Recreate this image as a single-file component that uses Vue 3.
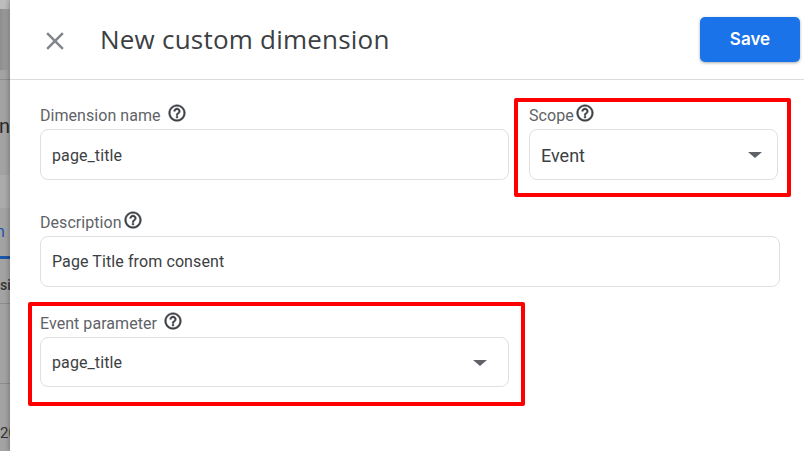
<script setup>
const helpPath = 'M11 18h2v-2h-2v2zm1-16C6.48 2 2 6.48 2 12s4.48 10 10 10 10-4.48 10-10S17.52 2 12 2zm0 18c-4.41 0-8-3.59-8-8s3.59-8 8-8 8 3.59 8 8-3.59 8-8 8zm0-14c-2.21 0-4 1.79-4 4h2c0-1.1.9-2 2-2s2 .9 2 2c0 2-3 1.75-3 5h2c0-2.25 3-2.5 3-5 0-2.21-1.79-4-4-4z'
</script>

<template>
  <div class="screen">
    <aside class="backdrop">
      <div class="bd-top"></div>
      <div class="bd-band"></div>
      <div class="bd-rule"></div>
      <span class="bd-n">n</span>
      <div class="bd-light"></div>
      <div class="bd-tab"><span class="bd-blue">n</span></div>
      <div class="bd-sic">sic</div>
      <div class="bd-line one"></div>
      <div class="bd-line two"></div>
      <div class="bd-num">20</div>
    </aside>
    <main class="panel">
      <header class="head">
        <button class="close" aria-label="Close">
          <svg width="30" height="30" viewBox="0 0 24 24"><path fill="#80868b" d="M19 6.41 17.59 5 12 10.59 6.41 5 5 6.41 10.59 12 5 17.59 6.41 19 12 13.41 17.59 19 19 17.59 13.41 12z"/></svg>
        </button>
        <h1>New custom dimension</h1>
        <button class="save">Save</button>
      </header>
      <div class="form">
        <div class="row top">
          <div class="field name">
            <label>Dimension name <svg class="help gap" viewBox="0 0 24 24"><path :d="helpPath"/></svg></label>
            <div class="box nudge">page_title</div>
          </div>
          <div class="field scope">
            <label>Scope<svg class="help tight" viewBox="0 0 24 24"><path :d="helpPath"/></svg></label>
            <div class="box select big nudge">Event<i class="caret"></i></div>
          </div>
        </div>
        <div class="field desc">
          <label>Description<svg class="help tight" viewBox="0 0 24 24"><path :d="helpPath"/></svg></label>
          <div class="box">Page Title from consent</div>
        </div>
        <div class="field param">
          <label>Event parameter <svg class="help gap" viewBox="0 0 24 24"><path :d="helpPath"/></svg></label>
          <div class="box select short">page_title<i class="caret"></i></div>
        </div>
      </div>
      <div class="mark mark-scope"></div>
      <div class="mark mark-param"></div>
    </main>
  </div>
</template>

<style>
html, body { margin: 0; padding: 0; background: #fff; overflow: hidden; }
</style>

<style scoped>
.screen { display: flex; width: 804px; height: 451px; font-family: Roboto, "Liberation Sans", sans-serif; overflow: hidden; }
.backdrop { width: 10px; flex: none; position: relative; overflow: hidden; background: #a3a3a3; color: #333; }
.bd-top { height: 9px; background: #bdbdbd; }
.bd-band { height: 61px; background: linear-gradient(90deg, #8e8e8e, #a3a3a3); }
.bd-rule { position: absolute; left: 0; top: 79px; width: 10px; height: 1px; background: #8c8c8c; }
.bd-n { position: absolute; left: -1px; top: 114px; font-size: 20px; color: #2a2a2a; }
.bd-light { position: absolute; left: 0; top: 175px; width: 10px; height: 33px; background: #ababab; }
.bd-tab { position: absolute; left: 0; top: 208px; width: 10px; height: 51px; border-bottom: 3px solid #1a56a8; box-sizing: border-box; }
.bd-blue { position: absolute; left: -4px; top: 14px; font-size: 16px; color: #1a56a8; }
.bd-sic { position: absolute; left: 0; top: 277px; font-size: 14px; font-weight: 500; color: #333; }
.bd-line { position: absolute; left: 0; width: 10px; height: 1px; background: #8c8c8c; }
.one { top: 303px; }
.two { top: 383px; }
.bd-num { position: absolute; left: 0; top: 424px; font-size: 15px; color: #333; }
.panel { position: relative; flex: 1; background: #fff; box-shadow: -2px 0 4px rgba(0,0,0,.2); }
.head { display: flex; align-items: center; height: 79px; border-bottom: 1px solid #dadce0; padding: 0 4px 0 30px; }
.close { width: 30px; height: 30px; margin-top: 3px; padding: 0; border: 0; background: none; display: flex; }
.head h1 { margin: -2px 0 0 30px; flex: 1; font: 400 26px/32px "Open Sans", Roboto, sans-serif; letter-spacing: .22px; color: #3c4043; }
.save { width: 100px; height: 45px; margin-top: -1px; border: 0; border-radius: 5px; background: #1a73e8; color: #fff; font: 600 17px Inter, Roboto, sans-serif; box-shadow: 0 1px 3px rgba(60,64,67,.45); }
.form { padding: 23px 24px 0 30px; }
.row { display: flex; gap: 20px; }
.field label { display: flex; align-items: center; height: 24px; margin-bottom: 2px; font-size: 16px; letter-spacing: .05px; color: #5f6368; white-space: pre; }
.name { width: 469px; }
.scope { width: 249px; }
.desc { margin-top: 30px; }
.param { width: 469px; margin-top: 24px; }
.box { position: relative; box-sizing: border-box; height: 51px; border: 1px solid #e0e0e0; border-radius: 8px; padding: 0 11px; display: flex; align-items: center; font-size: 16px; color: #3c4043; letter-spacing: .1px; }
.nudge { padding-top: 2px; }
.big { font-size: 18px; letter-spacing: 0; }
.short { height: 50px; }
.help { width: 20px; height: 20px; fill: #3c4043; stroke: #3c4043; stroke-width: .5px; flex: none; margin-top: -4px; }
.gap { margin-left: 2px; }
.tight { margin-left: 1px; }
.caret { position: absolute; right: 15px; top: 22px; border-style: solid; border-width: 6px 7px 0; border-color: #5f6368 transparent transparent; }
.short .caret { right: 21px; }
.mark { position: absolute; box-sizing: border-box; border: 4px solid #f00; border-radius: 2px; pointer-events: none; }
.mark-scope { left: 504px; top: 98px; width: 277px; height: 99px; }
.mark-param { left: 18px; top: 302px; width: 497px; height: 104px; }
</style>
